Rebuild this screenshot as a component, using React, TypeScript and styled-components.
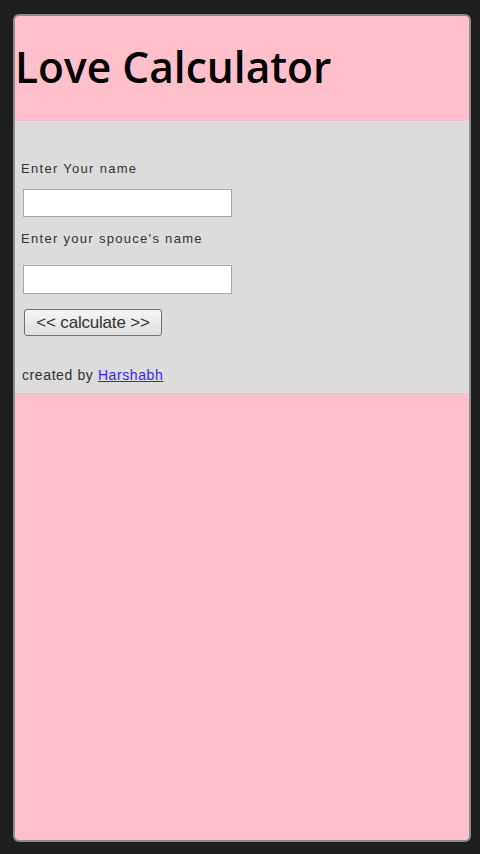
import React from "react";
import styled, { createGlobalStyle } from "styled-components";

const Global = createGlobalStyle`
  html, body {
    margin: 0;
    padding: 0;
    background: #1e1e1e;
  }
  body {
    width: 480px;
    height: 854px;
    overflow: hidden;
  }
`;

const Window = styled.div`
  box-sizing: border-box;
  width: 458px;
  height: 828px;
  margin: 14px 0 0 13px;
  border: 2px solid #8c8c8c;
  border-radius: 6px;
  overflow: hidden;
  display: flex;
  flex-direction: column;
  background: #ffc0cb;
`;

const Header = styled.div`
  height: 105px;
  display: flex;
  align-items: center;
  padding: 0 0 4px 0;
  box-sizing: border-box;
`;

const Title = styled.h1`
  margin: 0;
  font-family: "Open Sans", "DejaVu Sans", sans-serif;
  font-weight: 600;
  font-size: 42.5px;
  color: #000;
`;

const FormBox = styled.div`
  height: 272px;
  background: #dcdcdc;
  padding: 40px 0 0 6px;
  box-sizing: border-box;
  display: flex;
  flex-direction: column;
  align-items: flex-start;
`;

const Label = styled.div<{ $top?: number; $gap: number }>`
  font-family: "Liberation Sans", Arial, sans-serif;
  font-size: 13px;
  letter-spacing: 1.3px;
  color: #333;
  line-height: 16px;
  margin-top: ${(p) => p.$top ?? 0}px;
  margin-bottom: ${(p) => p.$gap}px;
`;

const TextInput = styled.input<{ $h?: number }>`
  box-sizing: border-box;
  width: 209px;
  height: ${(p) => p.$h ?? 28}px;
  margin: 0 0 0 2px;
  border: 1px solid #a9a9a9;
  background: #fff;
  outline: none;
`;

const Button = styled.button`
  box-sizing: border-box;
  width: 138px;
  height: 27px;
  margin: 15px 0 0 3px;
  padding: 0;
  border: 1px solid #707070;
  border-radius: 3px;
  background: linear-gradient(#f6f6f6, #dedede);
  font-family: "Liberation Sans", Arial, sans-serif;
  font-size: 17px;
  letter-spacing: -0.2px;
  color: #333;
`;

const Credit = styled.div`
  margin: 31px 0 0 1px;
  font-family: "Liberation Sans", Arial, sans-serif;
  font-size: 14px;
  line-height: 16px;
  letter-spacing: 0.6px;
  color: #333;
`;

const Link = styled.a`
  color: #3a22ff;
`;

const Filler = styled.div`
  flex: 1;
`;

export default function App() {
  return (
    <>
      <Global />
      <Window>
        <Header>
          <Title>Love Calculator</Title>
        </Header>
        <FormBox>
          <Label $gap={12}>Enter Your name</Label>
          <TextInput type="text" />
          <Label $top={14} $gap={18}>Enter your spouce's name</Label>
          <TextInput type="text" $h={29} />
          <Button>&lt;&lt; calculate &gt;&gt;</Button>
          <Credit>
            created by <Link href="#">Harshabh</Link>
          </Credit>
        </FormBox>
        <Filler />
      </Window>
    </>
  );
}
